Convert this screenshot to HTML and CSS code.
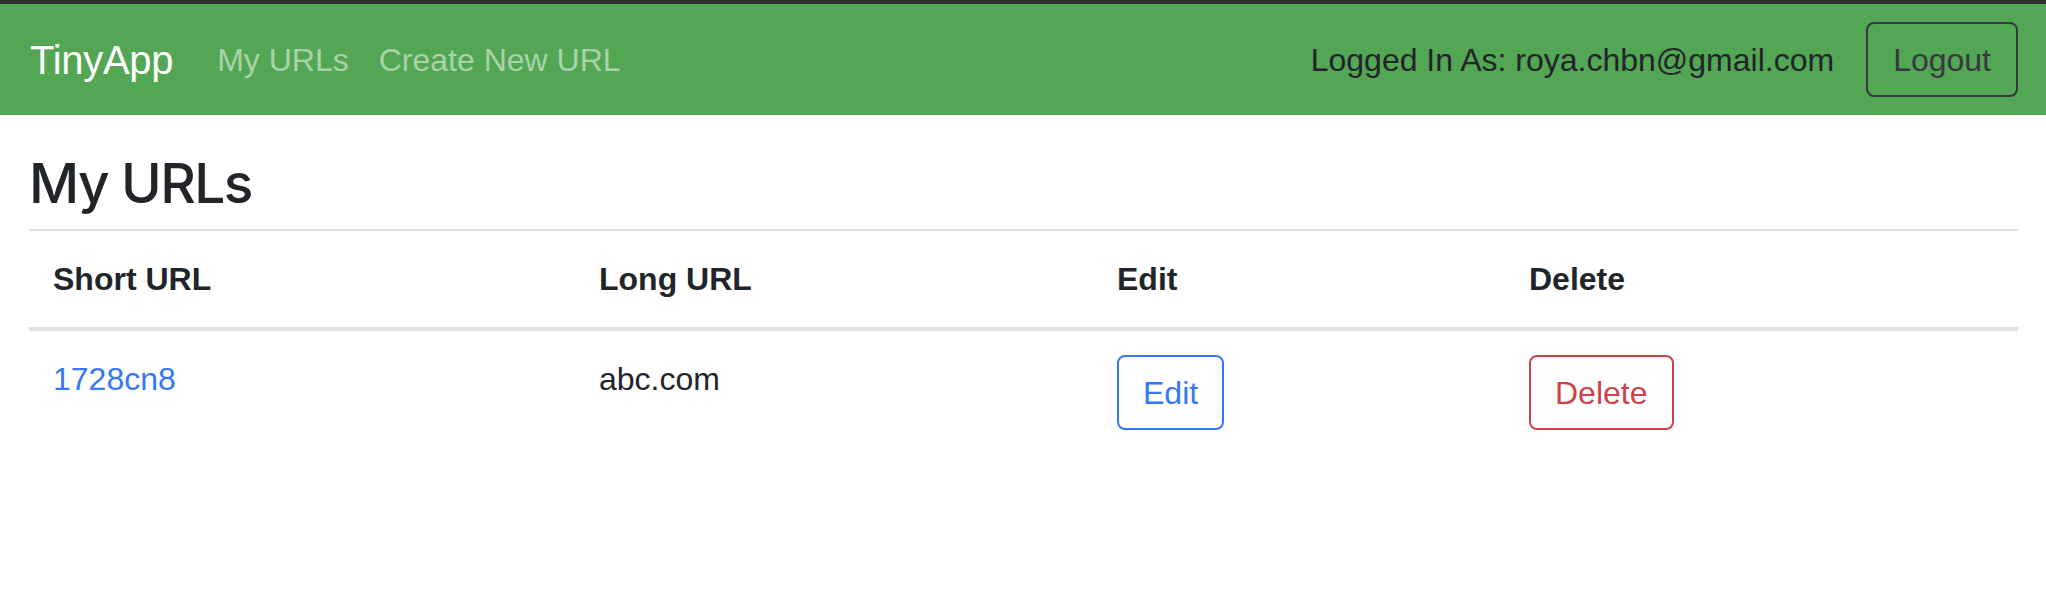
FILE: index.html
```html
<!DOCTYPE html>
<html lang="en">
<head>
<meta charset="utf-8">
<title>TinyApp</title>
<link rel="stylesheet" href="styles.css">
</head>
<body>
<div class="topbar"></div>
<nav class="navbar">
  <a class="brand" href="#">TinyApp</a>
  <ul class="nav">
    <li><a class="nav-link" href="#">My URLs</a></li>
    <li><a class="nav-link" href="#">Create New URL</a></li>
  </ul>
  <div class="user">
    <span class="logged">Logged In As: roya.chbn@gmail.com</span>
    <button class="btn btn-logout">Logout</button>
  </div>
</nav>
<main class="container">
  <h1 class="title">My URLs</h1>
  <table class="url-table">
    <colgroup>
      <col class="c-short">
      <col class="c-long">
      <col class="c-edit">
      <col class="c-del">
    </colgroup>
    <thead>
      <tr>
        <th>Short URL</th>
        <th>Long URL</th>
        <th>Edit</th>
        <th>Delete</th>
      </tr>
    </thead>
    <tbody>
      <tr>
        <td><a class="short-link" href="#">1728cn8</a></td>
        <td>abc.com</td>
        <td><a class="btn btn-edit" href="#">Edit</a></td>
        <td><button class="btn btn-delete">Delete</button></td>
      </tr>
    </tbody>
  </table>
</main>
</body>
</html>
```

FILE: styles.css
```css
* { box-sizing: border-box; }

body {
  margin: 0;
  font-family: "Liberation Sans", Arial, sans-serif;
  font-size: 32px;
  line-height: 1.5;
  color: #212529;
  background: #ffffff;
}

.topbar {
  height: 4px;
  background: #2e2e2e;
}

.navbar {
  display: flex;
  align-items: center;
  height: 111px;
  padding: 0 28px 0 30px;
  background: #53a653;
}

.brand {
  font-size: 40px;
  line-height: 1.5;
  color: #ffffff;
  text-decoration: none;
  margin-right: 29px;
  letter-spacing: -0.3px;
}

.nav {
  display: flex;
  list-style: none;
  margin: 0;
  padding: 0;
}

.nav-link {
  display: block;
  padding: 0 15px;
  color: #a9d3a9;
  text-decoration: none;
}

.user {
  margin-left: auto;
  display: flex;
  align-items: center;
}

.logged {
  color: #212529;
  margin-right: 32px;
}

.btn {
  display: inline-block;
  font-family: inherit;
  font-size: 32px;
  line-height: 48px;
  padding: 11.5px 24px;
  border: 2px solid transparent;
  border-radius: 8px;
  background: transparent;
  text-decoration: none;
  cursor: pointer;
}

.btn-logout {
  color: #343a40;
  border-color: #343a40;
  padding-left: 25px;
  padding-right: 25px;
}

.btn-edit {
  color: #3478f6;
  border-color: #3478f6;
}

.btn-delete {
  color: #cf404a;
  border-color: #cf404a;
}

.container {
  padding: 35px 28px 0 29px;
}

.title {
  font-family: Inter, "Liberation Sans", sans-serif;
  font-weight: 500;
  font-size: 55px;
  line-height: 1.2;
  letter-spacing: -1.6px;
  margin: 0 0 13px;
  color: #212529;
}

.url-table {
  width: 100%;
  border-collapse: collapse;
  table-layout: fixed;
}

.c-short { width: 546px; }
.c-long { width: 518px; }
.c-edit { width: 412px; }

.url-table th,
.url-table td {
  padding: 24px;
  text-align: left;
  vertical-align: top;
}

.url-table th {
  font-weight: bold;
  border-top: 2px solid #dee2e6;
  border-bottom: 4px solid #dee2e6;
}

.short-link {
  color: #3478f6;
  text-decoration: none;
}
```
